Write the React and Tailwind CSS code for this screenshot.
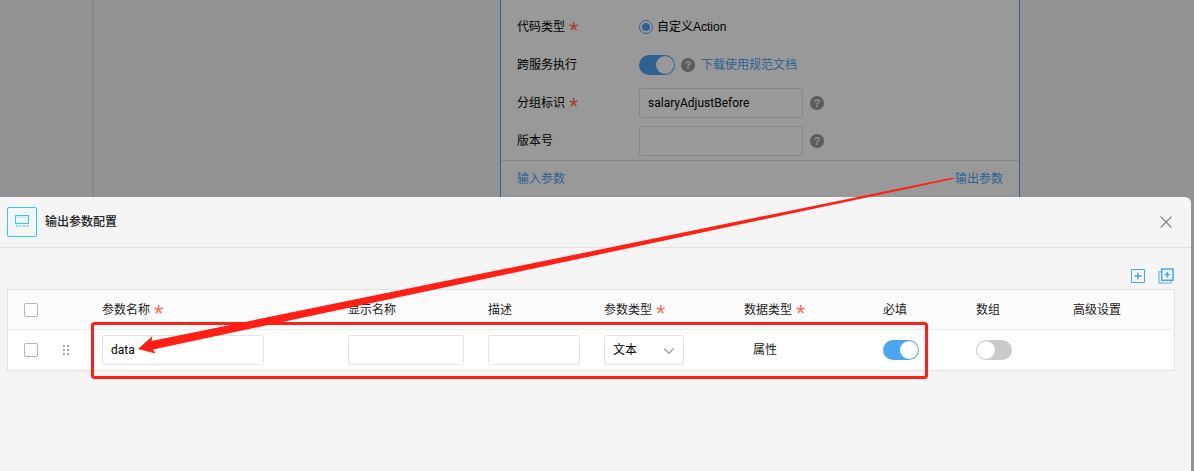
import { useState } from 'react'
import { X, ChevronDown } from 'lucide-react'

const COLUMNS = [
  { title: '参数名称', width: 'w-[246px]', required: true },
  { title: '显示名称', width: 'w-[140px]' },
  { title: '描述',     width: 'w-[116px]' },
  { title: '参数类型', width: 'w-[140px]', required: true },
  { title: '数据类型', width: 'w-[139px]', required: true },
  { title: '必填',     width: 'w-[93px]' },
  { title: '数组',     width: 'w-[97px]' },
  { title: '高级设置', width: '' },
]

const INPUT = 'h-[30px] rounded-[3px] border border-[#e1e1e1] bg-white px-2 font-[Roboto,"Noto_Sans_CJK_SC",sans-serif] text-black outline-none'
const CHECK = 'block size-[14px] appearance-none rounded-[2px] border border-[#b4b4b4] bg-white checked:bg-[#4aa5f0]'

function Star() {
  return <span className="ml-1 h-4 text-[24px] leading-6 text-[#ff7050]">*</span>
}

function Switch({ label, on }) {
  const [checked, setChecked] = useState(on)
  return (
    <input
      type="checkbox"
      role="switch"
      aria-label={label}
      checked={checked}
      onChange={e => setChecked(e.target.checked)}
      className="flex h-5 w-9 shrink-0 appearance-none items-center rounded-full bg-[#cacaca] px-px before:size-[18px] before:rounded-full before:bg-white checked:justify-end checked:bg-[#4aa5f0]"
    />
  )
}

function Help() {
  return (
    <button type="button" aria-label="help" className="flex size-[14px] items-center justify-center rounded-full bg-[#999] text-[11px] font-bold leading-none text-[#f0f0f0]">?</button>
  )
}

function Field({ id, label, required, children }) {
  return (
    <div className="flex h-[38px] items-center">
      <label htmlFor={id} className="flex w-[122px] shrink-0 items-center text-black">{label}{required && <Star />}</label>
      {children}
    </div>
  )
}

function ActionCard() {
  return (
    <section className="ml-[407px] w-[520px] border-x border-[#4aa5f0] bg-white pt-2">
      <div className="px-4">
        <Field id="codeType" label="代码类型" required>
          <input id="codeType" type="radio" defaultChecked className="flex size-[14px] appearance-none items-center justify-center rounded-full border border-[#4aa5f0] checked:before:size-2 checked:before:rounded-full checked:before:bg-[#4aa5f0]" />
          <label htmlFor="codeType" className="ml-1 text-black">自定义Action</label>
        </Field>
        <Field label="跨服务执行">
          <Switch label="跨服务执行" on />
          <div className="ml-1.5 flex items-center gap-1.5">
            <Help />
            <a href="#doc" className="text-[#4aa5f0]">下载使用规范文档</a>
          </div>
        </Field>
        <Field id="group" label="分组标识" required>
          <input id="group" defaultValue="salaryAdjustBefore" className={`${INPUT} mr-[7px] w-[164px]`} />
          <Help />
        </Field>
        <Field id="version" label="版本号">
          <input id="version" className={`${INPUT} mr-[7px] w-[164px]`} />
          <Help />
        </Field>
      </div>
      <div className="flex h-[37px] items-center justify-between border-t border-[#e1e1e1] px-4">
        <a href="#input" className="text-[#4aa5f0]">输入参数</a>
        <a href="#output" className="text-[#4aa5f0]">输出参数</a>
      </div>
    </section>
  )
}

function PanelIcon() {
  return (
    <span className="flex size-[30px] items-center justify-center rounded-[2px] border border-[#2bcdf0]">
      <svg width="14" height="14" viewBox="0 0 14 14" fill="none">
        <path d="M1 2h12" stroke="#a4e8f8" />
        <rect x="0.5" y="0.5" width="13" height="8" stroke="#2bcdf0" />
        <path d="M1 11h2M4.500 11h2M8 11h2M11.500 11h2" stroke="#2bcdf0" strokeOpacity="0.6" strokeWidth="2" />
      </svg>
    </span>
  )
}

function ParamTable() {
  return (
    <div className="border border-[#e2e2e2] bg-white">
      <table className="w-full table-fixed border-separate border-spacing-0">
        <thead>
          <tr className="h-10 bg-[#fbfbfb]">
            <th className="w-[47px] border-b border-[#ededed] pl-4"><input type="checkbox" aria-label="select all" className={CHECK} /></th>
            <th className="w-[35px] border-b border-[#ededed]" />
            {COLUMNS.map(c => (
              <th key={c.title} className={`${c.width} border-b border-[#ededed] px-3 text-left font-normal`}>
                <span className="flex items-center">{c.title}{c.required && <Star />}</span>
              </th>
            ))}
          </tr>
        </thead>
        <tbody>
          <tr className="h-10">
            <td className="pl-4"><input type="checkbox" aria-label="select data" className={CHECK} /></td>
            <td className="pl-2">
              <svg width="6" height="10" viewBox="0 0 6 10" fill="#a8a8a8">
                <path d="M0 0h2v2H0zM4 0h2v2H4zM0 4h2v2H0zM4 4h2v2H4zM0 8h2v2H0zM4 8h2v2H4z" />
              </svg>
            </td>
            <td className="px-3"><input aria-label="参数名称" defaultValue="data" className={`${INPUT} block w-[162px]`} /></td>
            <td className="px-3"><input aria-label="显示名称" className={`${INPUT} block w-full`} /></td>
            <td className="px-3"><input aria-label="描述" className={`${INPUT} block w-full`} /></td>
            <td className="px-3">
              <div className="relative w-20">
                <select aria-label="参数类型" className={`${INPUT} block w-full appearance-none`}>
                  <option>文本</option>
                </select>
                <ChevronDown size={18} strokeWidth={1.5} className="pointer-events-none absolute right-1.5 top-[7px] text-[#999]" />
              </div>
            </td>
            <td className="pl-[21px]">属性</td>
            <td className="px-3"><Switch label="必填" on /></td>
            <td className="px-3"><Switch label="数组" on={false} /></td>
            <td />
          </tr>
        </tbody>
      </table>
    </div>
  )
}

function OutputPanel() {
  return (
    <section className="relative mr-[3px] flex-1 rounded-tr-md bg-[#f5f5f5]">
      <header className="flex h-[51px] items-center border-b border-[#e2e2e2] pl-[7px] pr-[15px]">
        <PanelIcon />
        <h2 className="ml-2 flex-1 font-medium text-[#222]">输出参数配置</h2>
        <button type="button" aria-label="close"><X size={20} strokeWidth={1.5} className="text-[#888]" /></button>
      </header>
      <div className="pl-[7px] pr-4">
        <div className="flex h-[41px] items-end justify-end gap-3 pb-[5px] pr-px">
          <button type="button" aria-label="add">
            <svg width="16" height="16" viewBox="0 0 16 16" fill="none" stroke="#4aa5f0">
              <path d="M1.5 1.5h13v13h-13z" />
              <path d="M4.5 8h7M8 4.5v7" strokeWidth="1.5" />
            </svg>
          </button>
          <button type="button" aria-label="add copy">
            <svg width="16" height="16" viewBox="0 0 16 16" fill="none" stroke="#4aa5f0">
              <path d="M3.7 1h11.300v11.300H3.700z" strokeWidth="1.5" />
              <path d="M3 3.700H1V15h12v-2" strokeOpacity="0.6" strokeWidth="1.600" />
              <path d="M6.600 6.600h5.400M9.300 4v5.400" strokeWidth="1.500" />
            </svg>
          </button>
        </div>
        <ParamTable />
      </div>
    </section>
  )
}

// Red frame around the row and the arrow from the link to the name field
function Annotation() {
  return (
    <svg className="pointer-events-none absolute left-0 top-0" width="960" height="384" viewBox="0 0 960 384">
      <rect x="92.5" y="323.5" width="834" height="54" rx="2" fill="none" stroke="#ff1f14" strokeWidth="3" />
      <path d="M138 349L152.5 336L151.5 341L953 177.5L953.5 179L153 349.5L155.5 353.500z" fill="#ff1f14" />
    </svg>
  )
}

export default function App() {
  return (
    <div className='relative flex min-h-screen flex-col bg-[#f5f5f5] font-["Liberation_Sans","Noto_Sans_CJK_SC",sans-serif] text-[12px] leading-4 text-[#222]'>
      <div className="flex">
        <aside className="w-[93px] border-r border-[#dcdcdc] shadow-sm" />
        <main className="flex-1">
          <ActionCard />
        </main>
      </div>
      <div className="absolute inset-0 bg-black/40" />
      <OutputPanel />
      <Annotation />
    </div>
  )
}
